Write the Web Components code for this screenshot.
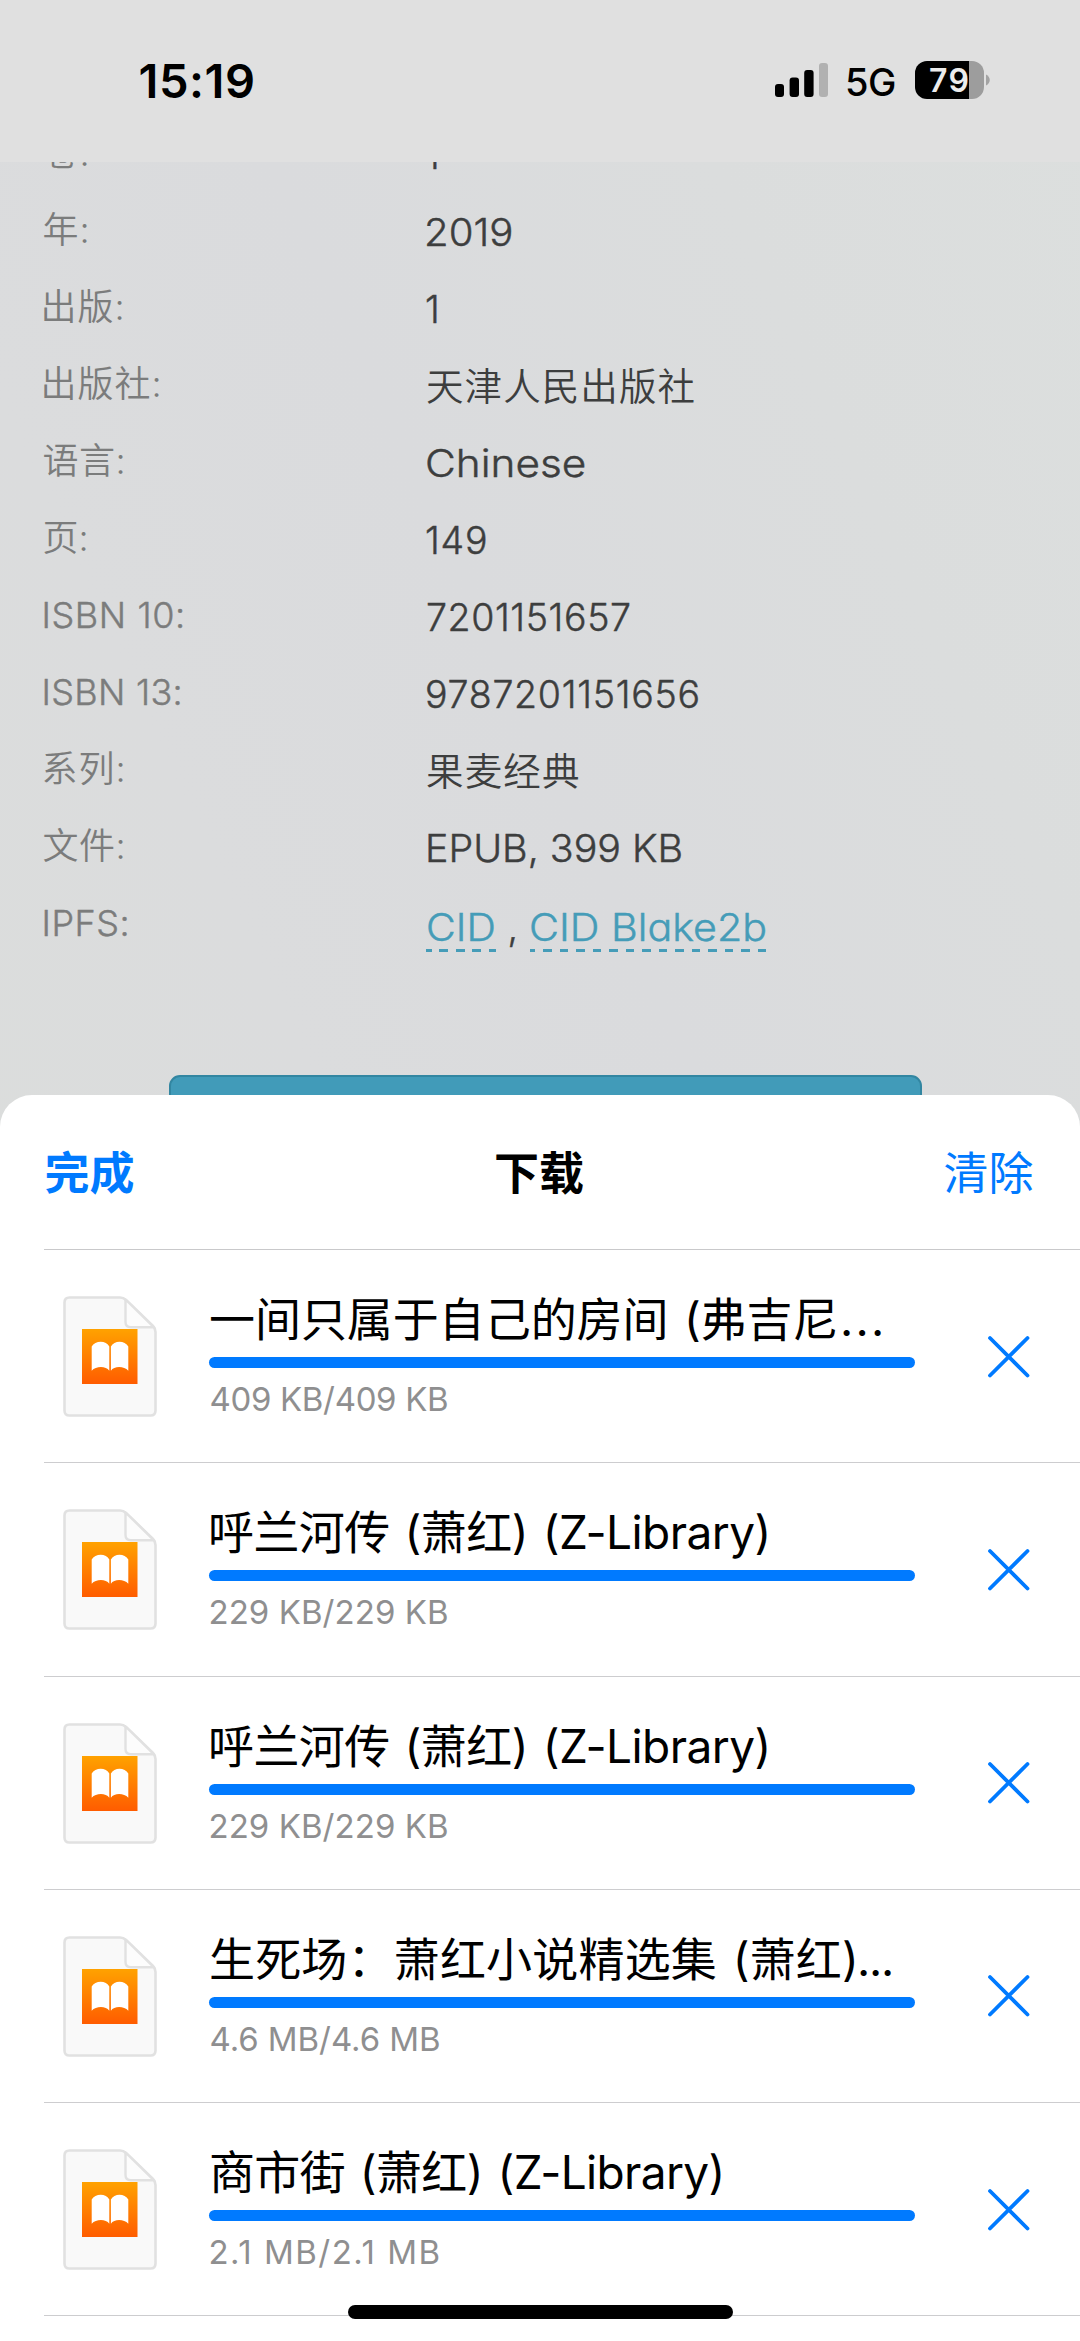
<!DOCTYPE html>
<html lang="zh-CN">
<head>
<meta charset="utf-8">
<title>下载</title>
<style>
html,body{margin:0;padding:0}
body{width:1080px;height:2341px;overflow:hidden;background:#fff;font-family:Inter,"Noto Sans CJK SC",sans-serif}
</style>
</head>
<body>
<phone-screen>
  <status-bar slot="status" time="15:19" network="5G" battery="79"></status-bar>
  <book-details slot="page">
    <detail-row label="卷:" label-ink="43"><fit-text ink="10">1</fit-text></detail-row>
    <detail-row label="年:" label-ink="43"><fit-text ink="84.5" stretch>2019</fit-text></detail-row>
    <detail-row label="出版:" label-ink="78"><fit-text ink="10">1</fit-text></detail-row>
    <detail-row label="出版社:" label-ink="115"><fit-text ink="266.5">天津人民出版社</fit-text></detail-row>
    <detail-row label="语言:" label-ink="79"><fit-text ink="157" stretch>Chinese</fit-text></detail-row>
    <detail-row label="页:" label-ink="42"><fit-text ink="59">149</fit-text></detail-row>
    <detail-row label="ISBN 10:" label-ink="137.5"><fit-text ink="202">7201151657</fit-text></detail-row>
    <detail-row label="ISBN 13:" label-ink="135"><fit-text ink="271.5">9787201151656</fit-text></detail-row>
    <detail-row label="系列:" label-ink="79"><fit-text ink="151">果麦经典</fit-text></detail-row>
    <detail-row label="文件:" label-ink="79"><fit-text ink="252.5" stretch>EPUB, 399 KB</fit-text></detail-row>
    <detail-row label="IPFS:" label-ink="82" links><dashed-link ink="65.5">CID</dashed-link><fit-text class="sep" ink="5">,</fit-text><dashed-link ink="232">CID Blake2b</dashed-link></detail-row>
  </book-details>
  <download-sheet slot="sheet">
    <download-item name="一间只属于自己的房间 (弗吉尼" ink="624.5" more="38" size="409 KB/409 KB" size-ink="236.5"></download-item>
    <download-item name="呼兰河传 (萧红) (Z-Library)" ink="555.5" size="229 KB/229 KB" size-ink="236.5"></download-item>
    <download-item name="呼兰河传 (萧红) (Z-Library)" ink="555.5" size="229 KB/229 KB" size-ink="236.5"></download-item>
    <download-item name="生死场：萧红小说精选集 (萧红)" ink="643" more="31" size="4.6 MB/4.6 MB" size-ink="228.5"></download-item>
    <download-item name="商市街 (萧红) (Z-Library)" ink="509.5" size="2.1 MB/2.1 MB" size-ink="228"></download-item>
  </download-sheet>
</phone-screen>
<script>
const shadow = (el, html) => { const r = el.attachShadow({mode:'open'}); r.innerHTML = html; return r; };
const pen = document.createElement('canvas').getContext('2d');

// Fits its text so the drawn glyphs span the width given in "ink":
// by tracking, or by widening the glyphs when "stretch" is set.
class FitText extends HTMLElement {
  connectedCallback() {
    if (!this.shadowRoot) shadow(this, `<style>:host{display:inline-block;white-space:pre;transform-origin:0 50%}</style><slot></slot>`);
    const t = this.textContent, n = [...t].length, cs = getComputedStyle(this);
    pen.font = `${cs.fontWeight} ${cs.fontSize} ${cs.fontFamily}`;
    const m = pen.measureText(t), gap = +(this.getAttribute('gap') || 0);
    const target = +this.getAttribute('ink');
    const ink = m.actualBoundingBoxRight + m.actualBoundingBoxLeft + gap * (t.split(' ').length - 1);
    if (gap) this.style.wordSpacing = gap + 'px';
    if (this.hasAttribute('stretch')) this.style.transform = `scaleX(${(target / ink).toFixed(4)})`;
    else if (n > 1) this.style.letterSpacing = ((target - ink) / (n - 1)).toFixed(3) + 'px';
    // The light Latin cut gets a hairline outline, which puts it between light and regular.
    if (cs.fontWeight === '350' && /^[\x20-\x7e]+$/.test(t)) this.style.webkitTextStroke = '0.45px currentColor';
    const nudge = /^[EI]/.test(t) ? 1 : 0;
    this.style.marginLeft = (m.actualBoundingBoxLeft + nudge).toFixed(2) + 'px';
  }
}

class PhoneScreen extends HTMLElement {
  constructor() { super(); shadow(this, `<style>
    :host{display:flex;flex-direction:column;width:1080px;height:2341px;position:relative;overflow:hidden;
      background:linear-gradient(to bottom left,#dcdfde 0,#dbdddd 400px,#dadbdd 800px,#dbdcdd 1150px,#dbdddc 1500px)}
    .home{position:absolute;left:348px;bottom:22px;width:385px;height:14px;border-radius:7px;background:#000}
    </style><slot name="status"></slot><slot name="page"></slot><slot name="sheet"></slot><div class="home"></div>`); }
}

class StatusBar extends HTMLElement {
  connectedCallback() { shadow(this, `<style>
    :host{display:flex;box-sizing:border-box;flex:none;height:162px;background:#e0e0e0;padding:0 90px 2px 140.5px;
      align-items:center;justify-content:space-between;color:#000}
    .time{font-size:47px;font-weight:600;line-height:60px;padding-top:1px}
    .right{display:flex;align-items:center}
    .sig{display:block;margin-right:19.5px}
    .net{font-size:38px;font-weight:500;line-height:50px;width:68px;padding-top:3px}
    .bat{box-sizing:border-box;width:69px;height:38px;border-radius:12px;background:linear-gradient(to right,#000 54px,#9d9d9d 54px);
      color:#ececec;font-size:32px;font-weight:600;line-height:40px;padding-left:15px}
    .nub{display:block;margin-left:2px}
    </style>
    <fit-text class="time" ink="112.5">${this.getAttribute('time')}</fit-text>
    <div class="right">
      <svg class="sig" width="53" height="36" viewBox="0 0 53 36"><g><rect x="0" y="22" width="9" height="13" rx="3"/><rect x="14.6" y="15.5" width="9.4" height="19.5" rx="3"/><rect x="29.2" y="8" width="9.4" height="27" rx="3"/><rect x="44" y="1" width="9" height="34" rx="3" fill="#b1b1b1"/></g></svg>
      <div class="net"><fit-text ink="48">${this.getAttribute('network')}</fit-text></div>
      <div class="bat"><fit-text ink="37.5">${this.getAttribute('battery')}</fit-text></div>
      <svg class="nub" width="4" height="12" viewBox="0 0 4 12"><path d="M0 .5C5 3 5 9 0 11.500Z" fill="#a3a3a3"/></svg>
    </div>`); }
}

class BookDetails extends HTMLElement {
  constructor() { super(); shadow(this, `<style>
    :host{display:block;flex:none;height:933px;overflow:hidden}
    .rows{display:flex;flex-direction:column;margin-top:-48px}
    .btn{box-sizing:border-box;width:753px;height:80px;margin:114px 0 0 169px;border:2px solid #3286a1;border-radius:11px;background:#419bb9}
    </style><div class="rows"><slot></slot></div><div class="btn"></div>`); }
}

class DetailRow extends HTMLElement {
  connectedCallback() { shadow(this, `<style>
    :host{display:grid;grid-template-columns:383.5px 1fr;padding-left:43.5px;height:77px;line-height:77px;font-weight:350}
    .l{font-size:36px;color:#7b7c7c;padding-top:1px}
    .v{font-size:37.5px;color:#3d3e3e;padding-top:3px;display:flex;align-items:baseline}
    :host([links]) .v{padding-top:5px;margin-left:-1px;gap:14px}
    ::slotted(.sep){width:8px}
    </style><div class="l"><fit-text ink="${this.getAttribute('label-ink')}">${this.getAttribute('label')}</fit-text></div><div class="v"><slot></slot></div>`); }
}

class DashedLink extends HTMLElement {
  connectedCallback() {
    const ink = +this.getAttribute('ink');
    shadow(this, `<style>
    :host{display:block;box-sizing:border-box;width:${ink + 4}px;height:63px;padding-left:1.5px;color:#459cb8;white-space:nowrap;
      font-feature-settings:"cv11";
      background:repeating-linear-gradient(to right,#459cb8 0 5.5px,transparent 5.5px 13.3px,#459cb8 13.3px 16.5px) 0 100%/100% 3px no-repeat}
    </style><fit-text ink="${ink}" stretch>${this.textContent}</fit-text>`);
  }
}

class DownloadSheet extends HTMLElement {
  constructor() { super(); shadow(this, `<style>
    :host{display:flex;flex-direction:column;flex:1;background:#fff;border-radius:32px 32px 0 0}
    header{display:grid;grid-template-columns:1fr auto 1fr;box-sizing:border-box;height:154.200px;padding:0 46.500px 0 44.5px;
      line-height:158px;font-size:45px;color:#007aff}
    .done{font-weight:600}.t{color:#000;font-weight:600}.clear{text-align:right}
    .line{margin-left:44px;height:1px;background:#c9c9cb}
    </style><header><span class="done">完成</span><span class="t">下载</span><span class="clear">清除</span></header>
    <div class="line"></div><slot></slot>`); }
}

class EpubIcon extends HTMLElement {
  constructor() { super(); shadow(this, `<style>:host{display:block;width:94px;height:121px}svg{display:block}</style>
    <svg width="94" height="121" viewBox="0 0 94 121">
      <defs><linearGradient id="g" x1="0" y1="0" x2="0" y2="1"><stop offset="0" stop-color="#ffa200"/><stop offset="1" stop-color="#ff5c00"/></linearGradient></defs>
      <path d="M6.500 1.500H57Q60.500 1.500 63 4L90 30Q92.500 32.500 92.500 36V114.500Q92.500 119.500 87.500 119.500H6.500Q1.500 119.500 1.500 114.500V6.500Q1.500 1.500 6.500 1.500Z" fill="#f9f9f9" stroke="#e1e1e1" stroke-width="2.600"/>
      <path d="M62.500 3.500V26Q62.500 31.300 68 31.300H91Z" fill="#fcfcfc" stroke="#e1e1e1" stroke-width="2.400" stroke-linejoin="round"/>
      <rect x="19" y="33" width="55.500" height="55" fill="url(#g)"/>
      <path d="M28.700 50.500C32 44 43.500 44 46.300 50.500V74.700C43 69.800 33 69.800 28.700 74.700ZM47.900 50.500C51 44 62 44 65.300 50.500V74.700C61 69.800 51 69.800 47.900 74.700Z" fill="#fff"/>
    </svg>`); }
}

class DownloadItem extends HTMLElement {
  connectedCallback() { const a = k => this.getAttribute(k); shadow(this, `<style>
    :host{display:flex;flex:none;box-sizing:border-box;height:213.250px;margin-left:44px;border-bottom:1px solid #cdcdcf}
    epub-icon{margin:46px 52px 0 19px;flex:none}
    .body{width:706px;flex:none;padding-top:39px}
    .name{display:flex;font-size:46px;line-height:60px;height:60px;color:#000;padding-left:2px}
    .main{width:${+a('ink') + (a('more') === '38' ? 7.5 : 6)}px;flex:none;white-space:nowrap}
    .bar{height:11px;border-radius:5.500px;background:#007aff;margin-top:8px}
    .size{font-size:33px;line-height:40px;color:#8f8f90;padding:11px 0 0 1.500px;font-weight:400}
    .x{display:block;margin:84.500px 0 0 71.500px}
    </style><epub-icon></epub-icon>
    <div class="body"><div class="name"><div class="main"><fit-text ink="${a('ink')}" gap="2.5">${a('name')}</fit-text></div>${a('more') ? `<fit-text ink="${a('more')}">...</fit-text>` : ''}</div>
      <div class="bar"></div><div class="size"><fit-text ink="${a('size-ink')}">${a('size')}</fit-text></div></div>
    <svg class="x" width="44" height="44" viewBox="0 0 44 44"><path d="M3 3L40.500 40.500M40.500 3L3 40.500" stroke="#007aff" stroke-width="3.800" stroke-linecap="round"/></svg>`); }
}

customElements.define('fit-text', FitText);
customElements.define('phone-screen', PhoneScreen);
customElements.define('status-bar', StatusBar);
customElements.define('book-details', BookDetails);
customElements.define('detail-row', DetailRow);
customElements.define('dashed-link', DashedLink);
customElements.define('download-sheet', DownloadSheet);
customElements.define('epub-icon', EpubIcon);
customElements.define('download-item', DownloadItem);
// Slotted text takes its size from the row, so it is measured again once every row is upgraded.
document.querySelectorAll('fit-text').forEach(t => t.connectedCallback());
</script>
</body>
</html>
